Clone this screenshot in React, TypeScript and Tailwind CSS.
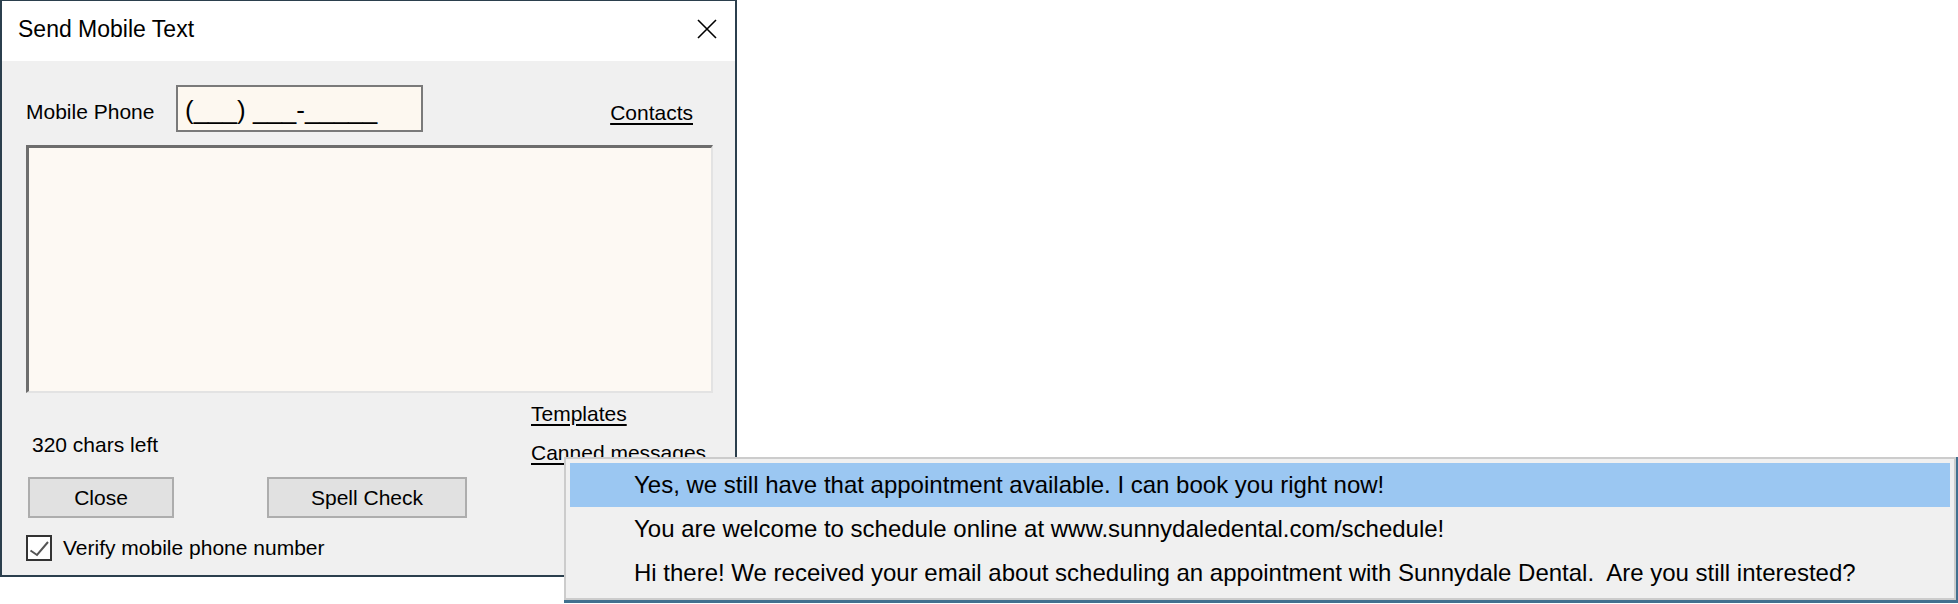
import React from "react";

const canned = [
  "Yes, we still have that appointment available. I can book you right now!",
  "You are welcome to schedule online at www.sunnydaledental.com/schedule!",
  "Hi there! We received your email about scheduling an appointment with Sunnydale Dental.  Are you still interested?",
];

export default function App() {
  return (
    <div className="relative w-[1958px] h-[604px] bg-white overflow-hidden text-black font-['Liberation_Sans',Arial,sans-serif]">
      {/* dialog */}
      <div className="w-[737px] h-[577px] border-2 border-t border-[#2b3f4d] flex flex-col bg-[#f0f0f0]">
        <div className="h-[60px] bg-white flex items-center justify-between pl-[16px] pr-[18px] pb-[4px]">
          <span className="text-[23px] leading-[28px]">Send Mobile Text</span>
          <svg width="20" height="20" viewBox="0 0 20 20">
            <path d="M1 1 L19 19 M19 1 L1 19" stroke="#000" strokeWidth="1.6" />
          </svg>
        </div>

        <div className="flex-1 pl-[24px] pr-[22px] text-[21px] leading-[24px]">
          <div className="mt-[24px] flex items-start h-[47px]">
            <span className="w-[150px] mt-[15px]">Mobile Phone</span>
            <div className="w-[247px] h-[47px] border-2 border-[#7a7a7a] bg-[#fdf8f0] pl-[7px] pt-[8px] text-[26px] leading-[30px]">
              (___) ___-_____
            </div>
            <span className="ml-auto mr-[20px] mt-[16px] underline underline-offset-[3px]">Contacts</span>
          </div>

          <div className="mt-[13px] h-[248px] border-t-[3px] border-l-[3px] border-r-2 border-b-2 border-t-[#6d6d6d] border-l-[#6d6d6d] border-r-[#e3e3e3] border-b-[#e3e3e3] bg-[#fdf9f3]" />

          <div className="flex h-[84px]">
            <div className="w-[505px] pt-[40px] pl-[6px]">320 chars left</div>
            <div className="flex flex-col pt-[9px] gap-[15px]">
              <span className="underline underline-offset-[3px]">Templates</span>
              <span className="underline underline-offset-[3px]">Canned messages</span>
            </div>
          </div>

          <div className="flex items-center h-[41px] pl-[2px] gap-[93px]">
            <button className="w-[146px] h-[41px] border-2 border-[#adadad] bg-[#e1e1e1]">Close</button>
            <button className="w-[200px] h-[41px] border-2 border-[#adadad] bg-[#e1e1e1]">Spell Check</button>
          </div>

          <div className="mt-[17px] flex items-center gap-[11px]">
            <div className="w-[26px] h-[26px] border-2 border-[#333333] bg-white">
              <svg width="22" height="22" viewBox="0 0 22 22">
                <path d="M2.5 13.5 L9 18 L20 5" fill="none" stroke="#555555" strokeWidth="2" />
              </svg>
            </div>
            <span>Verify mobile phone number</span>
          </div>
        </div>
      </div>

      {/* canned messages menu */}
      <div className="absolute left-[564px] top-[457px] border-r-2 border-b-[3px] border-[#41708f]">
        <div className="w-[1392px] border-2 border-[#cccccc] bg-[#f0f0f0] px-[4px] pt-[4px] pb-[3px] text-[24px] leading-[28px]">
          {canned.map((m, i) => (
            <div key={i} className={"h-[44px] flex items-center pl-[64px] whitespace-pre " + (i === 0 ? "bg-[#9bc7f2]" : "")}>
              {m}
            </div>
          ))}
        </div>
      </div>
    </div>
  );
}
